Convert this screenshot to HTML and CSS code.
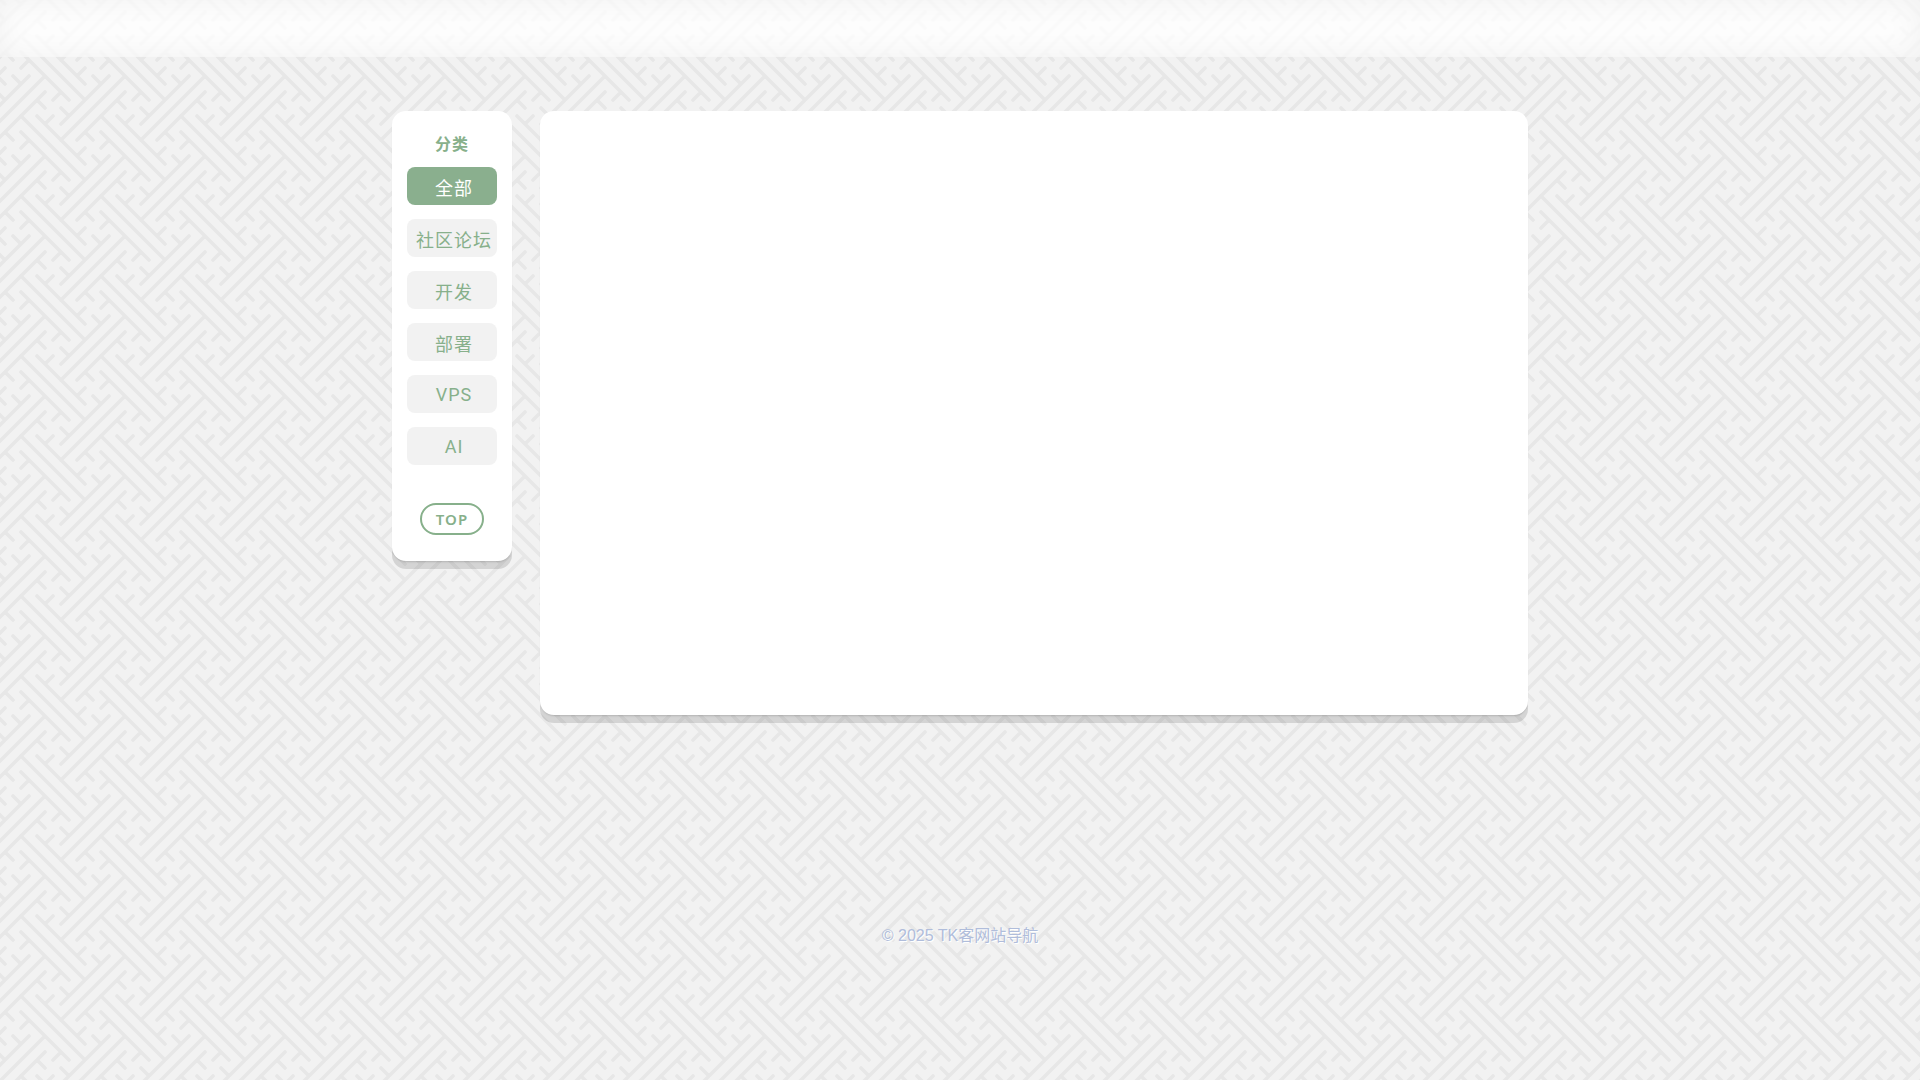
FILE: index.html
```html
<!DOCTYPE html>
<html lang="zh-CN">

	<head>
		<meta charset="utf-8">
		<meta name="viewport" content="width=device-width, initial-scale=1">
		<title>TK客网站导航</title>
		<link rel="stylesheet" href="styles.css">
	</head>

	<body>

		<header class="header"></header>

		<div class="container">
			<nav class="sidebar">
				<h2 class="sidebar-title">分类</h2>
				<button class="category active" type="button">全部</button>
				<button class="category" type="button">社区论坛</button>
				<button class="category" type="button">开发</button>
				<button class="category" type="button">部署</button>
				<button class="category" type="button">VPS</button>
				<button class="category" type="button">AI</button>
				<button class="top-button" type="button">TOP</button>
			</nav>

			<main class="content"></main>
		</div>

		<footer class="footer">© 2025 TK客网站导航</footer>

	</body>

</html>
```
FILE: styles.css
```css
* {
	box-sizing: border-box;
	margin: 0;
	padding: 0;
}

body {
	min-height: 100vh;
	font-family: "Liberation Sans", "Noto Sans CJK SC", sans-serif;
	font-size: 16px;
	background-color: #f2f2f2;
	background-image: url("data:image/svg+xml,%3Csvg xmlns='http://www.w3.org/2000/svg' width='80' height='80' viewBox='0 0 80 80'%3E%3Cdefs%3E%3Cpath id='a' d='M21 52l48 48M29 60l-8 8M61 92l-8 8M45 76l-64 64M37 36l48 48M45 44l8-8M77 76l8-8M21 36l64 64M109 76l-48 48M101 84l-8-8M69 116l-8-8M125 92l-48 48M117 100l8 8M85 132l8 8'/%3E%3C/defs%3E%3Cg fill='none' stroke='%23e7e7e7' stroke-width='3.6' stroke-linecap='round'%3E%3Cuse href='%23a'/%3E%3Cuse href='%23a' x='-80'/%3E%3Cuse href='%23a' x='80'/%3E%3Cuse href='%23a' y='-80'/%3E%3Cuse href='%23a' x='-80' y='-80'/%3E%3Cuse href='%23a' x='80' y='-80'/%3E%3C/g%3E%3C/svg%3E");
}

.header {
	height: 57px;
	background: rgba(255, 255, 255, 0.8);
	box-shadow: inset 0 0 30px rgba(0, 0, 0, 0.05);
}

.container {
	display: flex;
	align-items: flex-start;
	gap: 28px;
	max-width: 1136px;
	margin: 54px auto 0;
}

.sidebar,
.content {
	background: #fff;
	border-radius: 14px;
	box-shadow: 0 8px 0 rgba(0, 0, 0, 0.12), 0 2px 2px -1px rgba(0, 0, 0, 0.15);
}

.sidebar {
	display: flex;
	flex-direction: column;
	align-items: center;
	gap: 14px;
	flex: 0 0 120px;
	padding: 24px 15px 26px;
	font-family: Roboto, "Noto Sans CJK SC", sans-serif;
}

.sidebar-title {
	height: 18px;
	font-size: 16px;
	line-height: 20px;
	letter-spacing: 1px;
	color: #87b08b;
}

.category {
	width: 100%;
	height: 38px;
	padding: 1px 0 0 4px;
	border: none;
	border-radius: 8px;
	background: #f2f2f2;
	color: #87b08b;
	font-family: inherit;
	font-size: 18px;
	letter-spacing: 1px;
	white-space: nowrap;
	cursor: pointer;
}

.category.active {
	background: #8aaf8e;
	color: #fff;
}

.top-button {
	width: 64px;
	height: 32px;
	margin-top: 24px;
	border: 2px solid #87b08b;
	border-radius: 16px;
	background: #fff;
	color: #87b08b;
	font-family: "Noto Sans", sans-serif;
	font-size: 15px;
	font-weight: 600;
	letter-spacing: 1px;
	cursor: pointer;
}

.content {
	flex: 1;
	min-height: 604px;
}

.footer {
	margin-top: 208px;
	padding-bottom: 40px;
	line-height: 26px;
	text-align: center;
	color: #b0bddb;
	text-shadow: 1px 1px 0 #fff;
}
```
